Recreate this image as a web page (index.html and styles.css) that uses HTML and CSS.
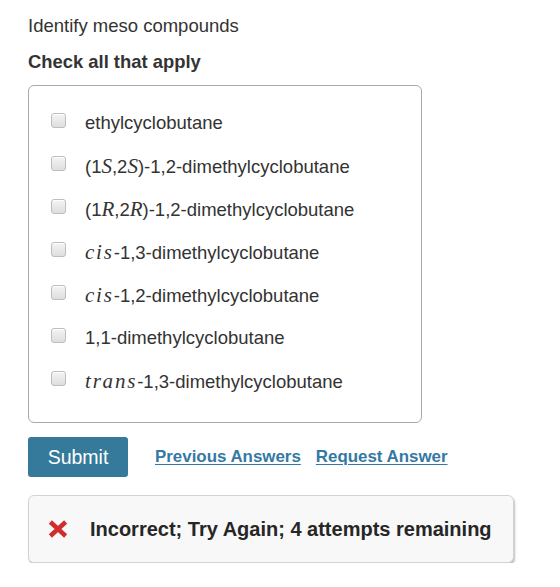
FILE: index.html
```html
<!DOCTYPE html>
<html>
<head>
<meta charset="utf-8">
<link rel="stylesheet" href="styles.css">
</head>
<body>
<div class="page">
  <p class="prompt">Identify meso compounds</p>
  <p class="instr">Check all that apply</p>
  <div class="choices">
    <label class="row"><span class="cb"></span><span class="txt">ethylcyclobutane</span></label>
    <label class="row"><span class="cb"></span><span class="txt">(1<i class="m">S</i>,2<i class="m">S</i>)-1,2-dimethylcyclobutane</span></label>
    <label class="row"><span class="cb"></span><span class="txt">(1<i class="m">R</i>,2<i class="m">R</i>)-1,2-dimethylcyclobutane</span></label>
    <label class="row"><span class="cb"></span><span class="txt"><i class="m w">cis</i>-1,3-dimethylcyclobutane</span></label>
    <label class="row"><span class="cb"></span><span class="txt"><i class="m w">cis</i>-1,2-dimethylcyclobutane</span></label>
    <label class="row"><span class="cb"></span><span class="txt">1,1-dimethylcyclobutane</span></label>
    <label class="row"><span class="cb"></span><span class="txt"><i class="m w">trans</i>-1,3-dimethylcyclobutane</span></label>
  </div>
  <div class="actions">
    <button class="submit">Submit</button>
    <a class="link" href="#">Previous Answers</a>
    <a class="link" href="#">Request Answer</a>
  </div>
  <div class="feedback">
    <svg class="x" width="20" height="18" viewBox="0 0 20 18"><path d="M4 3.5 L16 14.5 M16 3.5 L4 14.5" stroke="#d02d2d" stroke-width="4.5" stroke-linecap="square"/></svg>
    <span class="fbtext">Incorrect; Try Again; 4 attempts remaining</span>
  </div>
</div>
</body>
</html>
```
FILE: styles.css
```css
html, body {
  margin: 0;
  padding: 0;
  background: #fff;
}
body {
  font-family: "Liberation Sans", Arial, sans-serif;
  color: #333;
}
.page {
  padding: 14px 0 0 28px;
}
.prompt {
  margin: 0;
  font-size: 18.5px;
  line-height: 24px;
}
.instr {
  margin: 12px 0 0;
  font-size: 18.4px;
  font-weight: bold;
  line-height: 24px;
}
.choices {
  margin-top: 11px;
  width: 394px;
  height: 338px;
  box-sizing: border-box;
  border: 1.5px solid #a9a9a9;
  border-radius: 6px;
  padding: 26px 0 0 22px;
  display: flex;
  flex-direction: column;
  gap: 21px;
}
.row {
  display: flex;
  align-items: center;
  height: 22px;
  font-size: 18.5px;
  color: #333;
}
.cb {
  width: 13px;
  height: 13px;
  border: 1px solid #bdbdbd;
  border-radius: 3px;
  background: linear-gradient(#f4f4f4, #dedede);
  box-shadow: inset 0 1px 0 #fff;
  margin-right: 19px;
  margin-top: -5px;
  flex: none;
}
.m {
  font-family: "Liberation Serif", "Times New Roman", serif;
  font-style: italic;
  font-size: 21px;
}
.w {
  letter-spacing: 1.8px;
}
.actions {
  margin-top: 14px;
  display: flex;
  align-items: center;
}
.submit {
  width: 100px;
  height: 40px;
  background: #357a9b;
  color: #fff;
  border: none;
  border-radius: 3px;
  font-family: "Liberation Sans", Arial, sans-serif;
  font-size: 19.5px;
  padding: 0;
  margin-right: 27px;
}
.link {
  font-size: 16.9px;
  font-weight: bold;
  color: #3479a4;
  text-decoration: underline;
  text-underline-offset: 2px;
  margin-right: 15px;
}
.feedback {
  margin-top: 18px;
  width: 486px;
  height: 68px;
  box-sizing: border-box;
  background: #f8f8f8;
  border: 1px solid #d2d2d2;
  border-radius: 6px;
  box-shadow: 1px 2px 2px rgba(0,0,0,0.25);
  display: flex;
  align-items: center;
  padding-left: 19px;
}
.x {
  flex: none;
  margin-right: 22px;
}
.fbtext {
  font-size: 20px;
  font-weight: bold;
  color: #262626;
}
```
